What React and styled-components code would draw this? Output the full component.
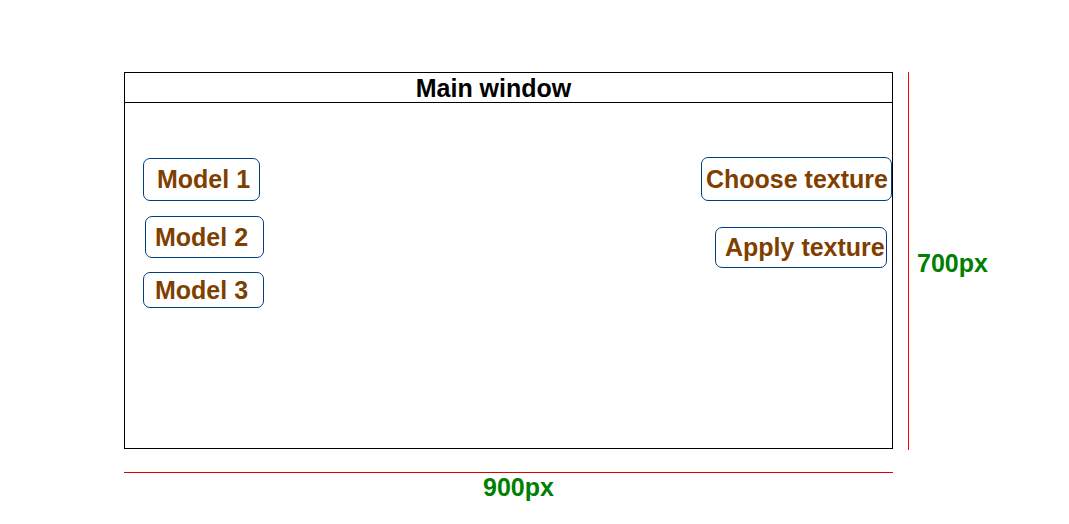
import styled, { createGlobalStyle } from "styled-components";

const GlobalStyle = createGlobalStyle`
  body {
    margin: 0;
    background: #ffffff;
    font-family: "Liberation Sans", Arial, sans-serif;
  }
`;

const Page = styled.div`
  padding: 72px 0 0 124px;
  font-family: "Liberation Sans", Arial, sans-serif;
  font-weight: bold;
  font-size: 25px;
`;

const TopRow = styled.div`
  display: flex;
  align-items: flex-start;
`;

const Window = styled.div`
  box-sizing: border-box;
  width: 769px;
  height: 377px;
  border: 1px solid #000000;
  display: flex;
  flex-direction: column;
`;

const TitleBar = styled.div`
  height: 27px;
  padding: 2px 30px 0 0;
  border-bottom: 1px solid #000000;
  line-height: 27px;
  text-align: center;
  color: #000000;
`;

const Body = styled.div`
  flex: 1;
  display: flex;
  justify-content: space-between;
  align-items: flex-start;
`;

const LeftColumn = styled.div`
  display: flex;
  flex-direction: column;
  align-items: flex-start;
  margin: 55px 0 0 18px;
`;

const RightColumn = styled.div`
  display: flex;
  flex-direction: column;
  align-items: flex-end;
  margin-top: 54px;
`;

const Button = styled.button`
  box-sizing: border-box;
  display: flex;
  align-items: center;
  width: ${(p) => p.$w}px;
  height: ${(p) => p.$h}px;
  margin: ${(p) => p.$mt || 0}px ${(p) => p.$mr || 0}px 0 ${(p) => p.$ml || 0}px;
  padding: 0 0 0 ${(p) => p.$pl}px;
  border: 1px solid #003f7f;
  border-radius: 7px;
  background: #ffffff;
  color: #7f3f00;
  font-family: "Liberation Sans", Arial, sans-serif;
  font-weight: bold;
  font-size: 25px;
  white-space: nowrap;
  overflow: hidden;
`;

const VRuler = styled.div`
  width: 1px;
  height: 378px;
  margin-left: 15px;
  background: #ff0000;
`;

const VLabel = styled.div`
  align-self: center;
  margin: 4px 0 0 8px;
  color: #008000;
`;

const HRuler = styled.div`
  width: 769px;
  height: 1px;
  margin-top: 22px;
  background: #e00000;
`;

const HLabel = styled.div`
  padding-left: 359px;
  color: #008000;
`;

const models = [
  { label: "Model 1", w: 117, h: 43, pl: 13, ml: 0, mt: 0 },
  { label: "Model 2", w: 119, h: 42, pl: 9, ml: 2, mt: 15 },
  { label: "Model 3", w: 121, h: 36, pl: 11, ml: 0, mt: 14 },
];

const App = () => {
  return (
    <Page>
      <GlobalStyle />
      <TopRow>
        <Window>
          <TitleBar>Main window</TitleBar>
          <Body>
            <LeftColumn>
              {models.map((m) => (
                <Button key={m.label} $w={m.w} $h={m.h} $pl={m.pl} $ml={m.ml} $mt={m.mt}>
                  {m.label}
                </Button>
              ))}
            </LeftColumn>
            <RightColumn>
              <Button $w={191} $h={44} $pl={4}>
                Choose texture
              </Button>
              <Button $w={172} $h={41} $pl={9} $mt={26} $mr={5}>
                Apply texture
              </Button>
            </RightColumn>
          </Body>
        </Window>
        <VRuler />
        <VLabel>700px</VLabel>
      </TopRow>
      <HRuler />
      <HLabel>900px</HLabel>
    </Page>
  );
};

export default App;
